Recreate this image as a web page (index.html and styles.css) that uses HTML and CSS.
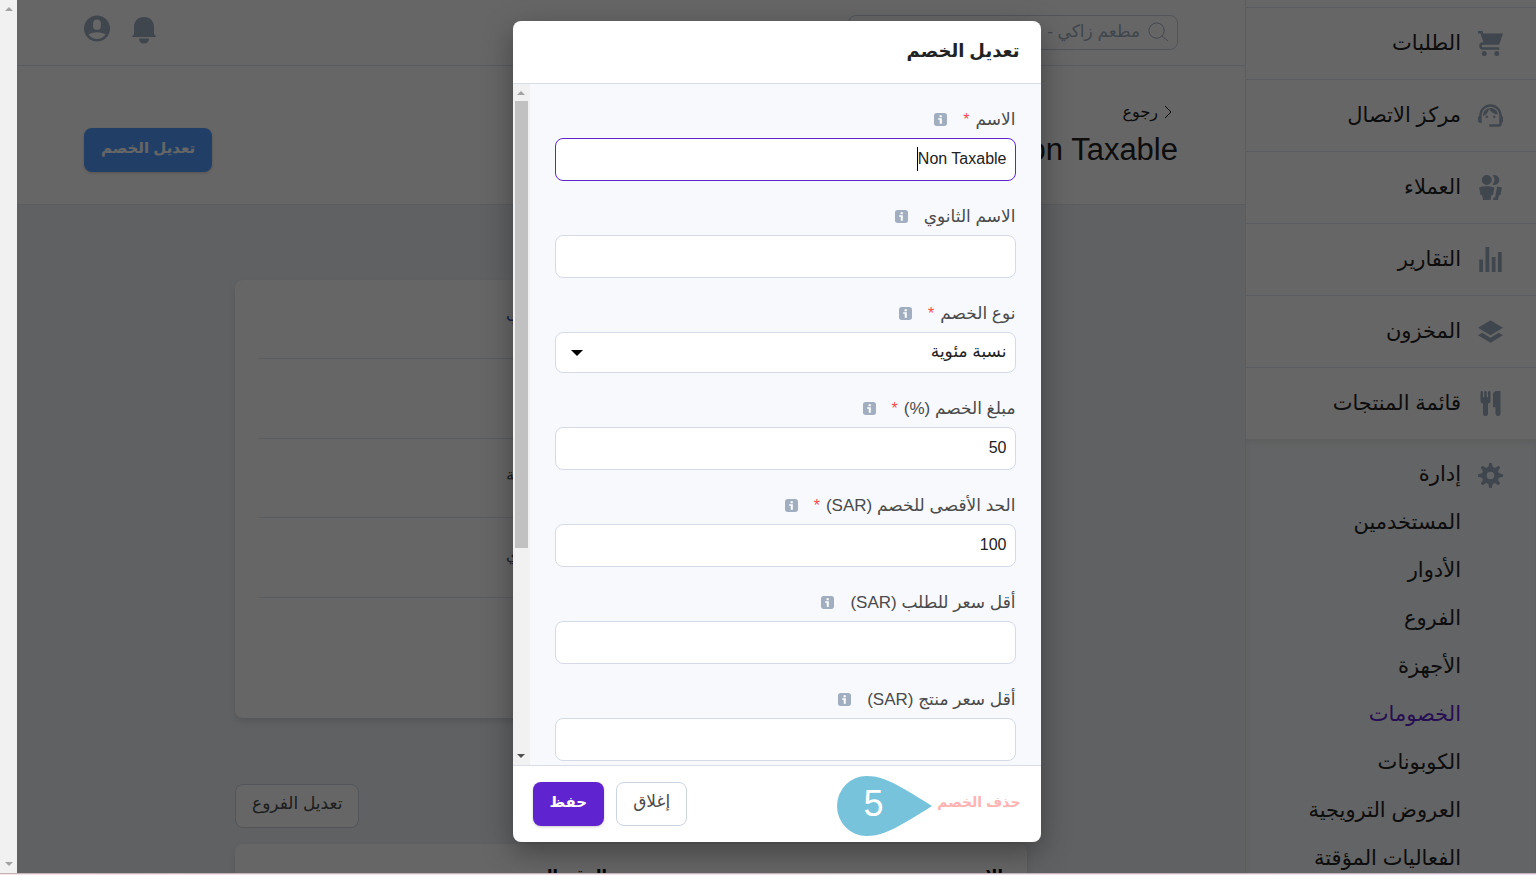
FILE: index.html
```html
<!DOCTYPE html>
<html lang="ar" dir="rtl">
<head>
    <meta charset="UTF-8">
    <meta name="viewport" content="width=device-width, initial-scale=1.0">
    <title>تعديل الخصم</title>
    <link rel="stylesheet" href="styles.css">
</head>
<body>
    <svg class="sprite" aria-hidden="true">
        <symbol id="info" viewBox="0 0 14 14">
            <rect width="14" height="14" rx="3" fill="#a0aec0"/>
            <path d="M6 2.500h2.400v2H6zM4.500 5.700h3.900V11.500H6.200V7.300H4.500z" fill="#fff"/>
        </symbol>
    </svg>

    <div class="screen">
        <div class="app">
            <nav class="sidebar">
                <a href="#" class="nav-item">
                    <svg viewBox="0 0 20 20"><path d="M4 2h16l-3 9H4a1 1 0 1 0 0 2h13v2H4a3 3 0 0 1 0-6h.33L3 5 2 2H0V0h3a1 1 0 0 1 1 1v1zm1 18a2 2 0 1 1 0-4 2 2 0 0 1 0 4zm10 0a2 2 0 1 1 0-4 2 2 0 0 1 0 4z"/></svg>
                    <span>الطلبات</span>
                </a>
                <a href="#" class="nav-item">
                    <svg viewBox="2 2 20 20"><path d="M21 12.220C21 6.730 16.740 3 12 3c-4.690 0-9 3.650-9 9.280-.6.340-1 .980-1 1.720v2c0 1.100.9 2 2 2h1v-6.100c0-3.870 3.130-7 7-7s7 3.130 7 7V19h-8v2h8c1.100 0 2-.9 2-2v-1.220c.590-.310 1-.920 1-1.640v-2.300c0-.7-.410-1.310-1-1.620z"/><circle cx="9" cy="13" r="1"/><circle cx="15" cy="13" r="1"/><path d="M18 11.030C17.520 8.180 15.040 6 12.050 6c-3.030 0-6.290 2.510-6.030 6.450 2.470-1.010 4.330-3.210 4.860-5.890 1.310 2.630 4 4.440 7.120 4.470z"/></svg>
                    <span>مركز الاتصال</span>
                </a>
                <a href="#" class="nav-item">
                    <svg viewBox="0 0 20 20"><path d="M7 8a4 4 0 1 1 0-8 4 4 0 0 1 0 8zm0 1c2.150 0 4.200.4 6.100 1.090L12 16h-1.250L10 20H4l-.75-4H2L.9 10.090A17.930 17.930 0 0 1 7 9zm8.310.170c1.320.180 2.590.480 3.800.920L18 16h-1.250L16 20h-3.960l.370-2h1.250l1.650-8.830zM13 0a4 4 0 1 1-1.330 7.760 5.960 5.960 0 0 0 0-7.520C12.100.1 12.530 0 13 0z"/></svg>
                    <span>العملاء</span>
                </a>
                <a href="#" class="nav-item">
                    <svg viewBox="0 0 20 20"><path d="M1 10h3v10H1V10zM6 0h3v20H6V0zm5 8h3v12h-3V8zm5-4h3v16h-3V4z"/></svg>
                    <span>التقارير</span>
                </a>
                <a href="#" class="nav-item">
                    <svg viewBox="0 0 20 20"><path d="M10 1l10 6-10 6L0 7l10-6zm6.670 10L20 13l-10 6-10-6 3.330-2L10 15l6.670-4z"/></svg>
                    <span>المخزون</span>
                </a>
                <a href="#" class="nav-item">
                    <svg viewBox="0 0 20 20"><path d="M18 11v7a2 2 0 0 1-4 0v-5h-2V3a3 3 0 0 1 3-3h3v11zM4 10a2 2 0 0 1-2-2V1a1 1 0 0 1 2 0v4h1V1a1 1 0 0 1 2 0v4h1V1a1 1 0 0 1 2 0v7a2 2 0 0 1-2 2v8a2 2 0 0 1-4 0v-8z"/></svg>
                    <span>قائمة المنتجات</span>
                </a>
                <div class="nav-group">
                    <a href="#" class="nav-title">
                        <svg viewBox="0 0 20 20"><path d="M3.940 6.500L2.220 3.640l1.420-1.420L6.500 3.940c.520-.3 1.100-.540 1.700-.7L9 0h2l.8 3.240c.6.160 1.180.4 1.700.7l2.860-1.720 1.420 1.420-1.720 2.860c.3.520.540 1.100.7 1.700L20 9v2l-3.240.8c-.160.6-.4 1.180-.7 1.700l1.720 2.860-1.420 1.420-2.860-1.720c-.520.3-1.100.540-1.700.7L11 20H9l-.8-3.240c-.6-.160-1.180-.4-1.700-.7l-2.860 1.720-1.420-1.420 1.720-2.860c-.3-.520-.540-1.100-.7-1.700L0 11V9l3.240-.8c.160-.6.4-1.180.7-1.700zM10 13a3 3 0 1 0 0-6 3 3 0 0 0 0 6z"/></svg>
                        <span>إدارة</span>
                    </a>
                    <a href="#" class="nav-sub">المستخدمين</a>
                    <a href="#" class="nav-sub">الأدوار</a>
                    <a href="#" class="nav-sub">الفروع</a>
                    <a href="#" class="nav-sub">الأجهزة</a>
                    <a href="#" class="nav-sub active">الخصومات</a>
                    <a href="#" class="nav-sub">الكوبونات</a>
                    <a href="#" class="nav-sub">العروض الترويجية</a>
                    <a href="#" class="nav-sub">الفعاليات المؤقتة</a>
                </div>
            </nav>

            <main class="main">
                <header class="topbar">
                    <label class="search">
                        <svg viewBox="0 0 22 22"><circle cx="9" cy="9" r="8"/><path d="M15 15l6 5"/></svg>
                        <input type="text" placeholder="مطعم زاكي - " aria-label="بحث">
                    </label>
                    <div class="topbar-icons">
                        <svg class="bell" viewBox="0 0 24 27"><path d="M12 0C6 0 2 4 2 10v7L.5 18.500C0 19 0 20 .8 20h22.400c.8 0 .8-1 .3-1.500L22 17v-7C22 4 18 0 12 0zM7 21.500h10c0 3-2 5-5 5s-5-2-5-5z"/></svg>
                        <svg class="user" viewBox="0 0 20 20"><path d="M10 20a10 10 0 1 1 0-20 10 10 0 0 1 0 20zM7 6v2a3 3 0 1 0 6 0V6a3 3 0 1 0-6 0zm-3.650 8.440a8 8 0 0 0 13.300 0 15.940 15.940 0 0 0-13.300 0z"/></svg>
                    </div>
                </header>

                <section class="page-head">
                    <div>
                        <a href="#" class="back">
                            <svg viewBox="0 0 8 14"><path d="M1 1l6 6-6 6"/></svg>
                            رجوع
                        </a>
                        <h1>Non Taxable</h1>
                    </div>
                    <button type="button" class="btn btn-blue">تعديل الخصم</button>
                </section>

                <section class="content">
                    <div class="card details">
                        <div class="row"><span class="link">الطلب</span></div>
                        <div class="row"></div>
                        <div class="row"><span>نسبة مئوية</span></div>
                        <div class="row"><span>الاسم الثانوي</span></div>
                        <div class="row"></div>
                    </div>
                    <div class="card-actions">
                        <button type="button" class="btn btn-light">تعديل الفروع</button>
                    </div>
                    <div class="card">
                        <table>
                            <tr><th>الاسم</th><th>الرقم المرجعي</th></tr>
                        </table>
                    </div>
                </section>
            </main>

            <div class="overlay">
                <div class="modal" role="dialog" aria-labelledby="modal-title">
                    <div class="modal-header"><h2 id="modal-title">تعديل الخصم</h2></div>
                    <div class="modal-body">
                        <form class="form" id="discount-form">
                            <div class="field">
                                <label for="name">الاسم <i>*</i><svg><use href="#info"/></svg></label>
                                <div class="input-wrap">
                                    <input type="text" id="name" class="focused" value="Non Taxable">
                                    <span class="caret"></span>
                                </div>
                            </div>
                            <div class="field">
                                <label for="name2">الاسم الثانوي<svg><use href="#info"/></svg></label>
                                <input type="text" id="name2">
                            </div>
                            <div class="field">
                                <label for="type">نوع الخصم <i>*</i><svg><use href="#info"/></svg></label>
                                <div class="input-wrap">
                                    <select id="type">
                                        <option>نسبة مئوية</option>
                                    </select>
                                    <span class="select-arrow"></span>
                                </div>
                            </div>
                            <div class="field">
                                <label for="amount">مبلغ الخصم (%) <i>*</i><svg><use href="#info"/></svg></label>
                                <input type="text" id="amount" value="50">
                            </div>
                            <div class="field">
                                <label for="max">الحد الأقصى للخصم (SAR) <i>*</i><svg><use href="#info"/></svg></label>
                                <input type="text" id="max" value="100">
                            </div>
                            <div class="field">
                                <label for="min-order">أقل سعر للطلب (SAR)<svg><use href="#info"/></svg></label>
                                <input type="text" id="min-order">
                            </div>
                            <div class="field">
                                <label for="min-product">أقل سعر منتج (SAR)<svg><use href="#info"/></svg></label>
                                <input type="text" id="min-product">
                            </div>
                        </form>
                        <div class="scrollbar">
                            <span class="arrow up"></span>
                            <span class="thumb"></span>
                            <span class="arrow down dark"></span>
                        </div>
                    </div>
                    <div class="modal-footer">
                        <button type="button" class="delete">حذف الخصم</button>
                        <button type="button" class="btn btn-light">إغلاق</button>
                        <button type="submit" form="discount-form" class="btn btn-purple">حفظ</button>
                        <div class="step">
                            <svg viewBox="0 0 95 60"><path d="M95 30C76 18 60 8 48 3.500 42 1 36 0 29.500 0a29.500 30 0 0 0 0 60C36 60 42 59 48 56.500 60 52 76 42 95 30z"/></svg>
                            <span>5</span>
                        </div>
                    </div>
                </div>
            </div>
        </div>

        <div class="scrollbar page-scroll">
            <span class="arrow up"></span>
            <span class="arrow down"></span>
        </div>
    </div>
</body>
</html>
```
FILE: styles.css
```css
* {
    box-sizing: border-box;
}

body {
    margin: 0;
    height: 100vh;
    overflow: hidden;
    background: linear-gradient(to right, #fbe4e4, #eae6f6);
    font-family: "Liberation Sans", "DejaVu Sans", sans-serif;
    font-size: 16px;
    line-height: 24px;
    color: #222;
}

a {
    color: inherit;
    text-decoration: none;
}

button,
input,
select {
    font: inherit;
    color: inherit;
}

.sprite {
    display: none;
}

.screen {
    display: flex;
    height: calc(100vh - 1px);
    border-bottom: 1px solid #c4b3bb;
}

.app {
    position: relative;
    display: flex;
    flex: 1;
    min-width: 0;
    overflow: hidden;
    background: #edf2f7;
}

/* sidebar */
.sidebar {
    flex: 0 0 291px;
    padding-top: 7px;
    background: #fff;
    border-left: 1px solid #e2e8f0;
    font-size: 21px;
    overflow: hidden;
}

.nav-item,
.nav-title {
    display: flex;
    align-items: center;
    gap: 17px;
    padding: 0 33px;
}

.nav-item {
    height: 72px;
    border-top: 1px solid #e2e8f0;
}

.nav-item svg,
.nav-title svg {
    width: 25px;
    height: 25px;
    fill: #a0aec0;
}

.nav-item span,
.nav-title span {
    padding-bottom: 2px;
}

.nav-group {
    padding-top: 12px;
    background: #f7fafc;
    box-shadow: inset 0 4px 6px rgba(0, 0, 0, 0.06);
}

.nav-title {
    height: 48px;
}

.nav-sub {
    display: flex;
    align-items: center;
    height: 48px;
    padding: 0 75px 2px 0;
}

.nav-sub.active {
    color: #5f24cf;
}

/* main */
.main {
    flex: 1;
    min-width: 0;
}

.topbar {
    display: flex;
    justify-content: space-between;
    height: 66px;
    padding: 15px 67px;
    background: #fff;
    border-bottom: 1px solid #e2e8f0;
}

.search {
    display: flex;
    align-items: center;
    gap: 8px;
    width: 330px;
    height: 35px;
    padding: 0 8px;
    border: 1px solid #cbd5e0;
    border-radius: 8px;
}

.search svg {
    width: 21px;
    height: 21px;
    fill: none;
    stroke: #a0aec0;
}

.search input {
    flex: 1;
    min-width: 0;
    padding: 0 0 2px;
    border: 0;
    outline: none;
    background: none;
    font-size: 17px;
}

.search input::placeholder {
    color: #a0aec0;
}

.topbar-icons {
    display: flex;
    gap: 22px;
}

.topbar-icons svg {
    height: 27px;
    fill: #a0aec0;
}

.bell {
    width: 24px;
    margin-top: 2px;
}

.user {
    width: 26px;
}

.page-head {
    display: flex;
    align-items: center;
    justify-content: space-between;
    height: 139px;
    padding: 0 67px 16px;
    background: #fff;
    border-bottom: 1px solid #e2e8f0;
}

.page-head .btn {
    margin-top: 46px;
}

.back {
    display: flex;
    align-items: center;
    gap: 6px;
    padding: 16px 6px 0;
}

.back svg {
    width: 8px;
    height: 14px;
    fill: none;
    stroke: #222;
}

h1 {
    margin: 6px 0 0;
    font-size: 31px;
    line-height: 40px;
    font-weight: normal;
}

.btn {
    height: 44px;
    padding: 0 16px 4px;
    border: 1px solid transparent;
    border-radius: 8px;
    cursor: pointer;
}

.btn-blue {
    background: #549fff;
    color: #fff;
    font-weight: bold;
    font-size: 15px;
    box-shadow: 0 1px 3px rgba(0, 0, 0, 0.2);
}

.btn-light {
    background: #fff;
    border-color: #cbd5e0;
    color: #4a4a4a;
    font-size: 17px;
}

.btn-purple {
    background: #5f24cf;
    color: #fff;
    font-weight: bold;
    font-size: 15px;
    box-shadow: 0 1px 3px rgba(0, 0, 0, 0.2);
}

.content {
    max-width: 792px;
    margin: 0 auto;
    padding-top: 75px;
}

.card {
    background: #fff;
    border-radius: 8px;
    box-shadow: 0 4px 6px rgba(0, 0, 0, 0.1);
}

.details {
    padding: 0 24px;
    color: #4a5568;
}

.row {
    display: flex;
    align-items: center;
    justify-content: flex-end;
    height: 79px;
    padding: 0 0 6px 247px;
    border-bottom: 1px solid #e2e8f0;
}

.row:nth-child(even) {
    height: 80px;
}

.row:last-child {
    height: 120px;
    border: 0;
}

.row .link {
    color: #3f51b5;
}

.card-actions {
    padding: 66px 0 16px;
    text-align: left;
}

.card-actions .btn {
    display: block;
    margin-right: auto;
}

table {
    width: 100%;
    border-collapse: collapse;
}

th {
    width: 50%;
    padding: 20px 24px;
    text-align: right;
    color: #000;
}

/* modal */
.overlay {
    position: absolute;
    inset: 0;
    display: flex;
    justify-content: center;
    align-items: flex-start;
    padding: 21px 0 31px;
    background: rgba(0, 0, 0, 0.6);
}

.modal {
    display: flex;
    flex-direction: column;
    width: 528px;
    height: 100%;
    background: #fff;
    border-radius: 8px;
    box-shadow: 0 10px 30px rgba(0, 0, 0, 0.35);
}

.modal-header {
    padding: 15px 21px 17px;
    border-bottom: 1px solid #d8dde8;
}

h2 {
    margin: 0;
    font-size: 18px;
    line-height: 30px;
}

.modal-body {
    display: flex;
    flex: 1;
    min-height: 0;
    background: #f7f9fc;
}

.form {
    flex: 1;
    min-width: 0;
    padding: 24px 25px 0;
    overflow: hidden;
}

.field {
    margin-bottom: 24px;
}

.field label {
    display: flex;
    align-items: center;
    height: 24px;
    margin-bottom: 6px;
    color: #4a4a4a;
    font-size: 17px;
}

.field label i {
    margin-right: 6px;
    color: #f34b4b;
    font-size: 16px;
    font-style: normal;
}

.field label svg {
    width: 13px;
    height: 13px;
    margin: 0 16px 2px 0;
}

.input-wrap {
    position: relative;
}

.field input,
.field select {
    display: block;
    width: 100%;
    height: 43px;
    padding: 0 8px 2px;
    border: 1px solid #d5dae8;
    border-radius: 8px;
    outline: none;
    background: #fff;
    color: #222;
}

.field input.focused {
    border-color: #5f24cf;
}

.field select {
    height: 41px;
    font-size: 17px;
    appearance: none;
}

.caret {
    position: absolute;
    top: 9px;
    right: 98px;
    width: 1px;
    height: 24px;
    background: #000;
}

.select-arrow {
    position: absolute;
    top: 18px;
    left: 16px;
    border: 6px solid transparent;
    border-top-color: #000;
    border-bottom: 0;
}

.scrollbar {
    display: flex;
    flex-direction: column;
    align-items: center;
    flex: 0 0 17px;
    padding: 7px 0;
    background: #f1f1f1;
}

.arrow {
    border: 4px solid transparent;
}

.arrow.up {
    border-top: 0;
    border-bottom-color: #a3a3a3;
}

.arrow.down {
    margin-top: auto;
    border-bottom: 0;
    border-top-color: #a3a3a3;
}

.arrow.dark {
    border-top-color: #505050;
}

.thumb {
    width: 13px;
    height: 67%;
    margin-top: 6px;
    background: #c1c1c1;
}

.modal-footer {
    position: relative;
    display: flex;
    align-items: center;
    gap: 12px;
    height: 77px;
    padding: 0 20px;
    border-top: 1px solid #d8dde8;
}

.delete {
    margin-left: auto;
    padding: 0 0 4px;
    border: 0;
    background: none;
    color: #ffb3b3;
    font-weight: bold;
    font-size: 14px;
}

/* numbered pointer over the footer */
.step {
    position: absolute;
    top: 10px;
    right: 109px;
    width: 95px;
    height: 60px;
}

.step svg {
    display: block;
    fill: #78c3dc;
}

.step span {
    position: absolute;
    top: 10px;
    left: 27px;
    color: #fff;
    font-size: 36px;
    line-height: 36px;
}
```
